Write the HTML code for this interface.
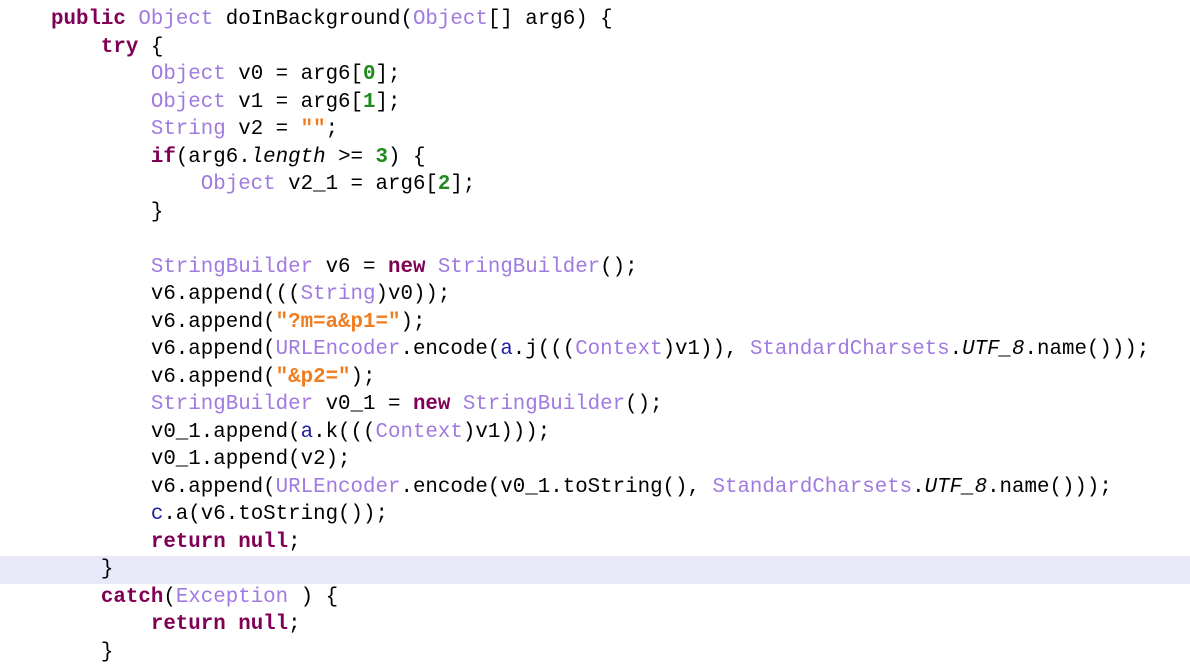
<!DOCTYPE html><html><head><style>
body{margin:0;background:#fff;width:1190px;height:666px;overflow:hidden}
pre{margin:0;padding-top:6px;font-family:"Liberation Mono",monospace;font-size:20.8px;line-height:27.5px;color:#000;position:relative}
.l{display:block;padding-left:51px;height:27.5px}
.hl{background:#e8e8f8}
.k{color:#7f0055;font-weight:bold}
.t{color:#a07ae0}
.s{color:#f07c1e;font-weight:bold}
.n{color:#1e8a1e;font-weight:bold}
.c{color:#1f1f9f}
i{font-style:italic}
</style></head><body><pre><span class="l"><span class="k">public</span> <span class="t">Object</span> doInBackground(<span class="t">Object</span>[] arg6) {</span><span class="l">    <span class="k">try</span> {</span><span class="l">        <span class="t">Object</span> v0 = arg6[<span class="n">0</span>];</span><span class="l">        <span class="t">Object</span> v1 = arg6[<span class="n">1</span>];</span><span class="l">        <span class="t">String</span> v2 = <span class="s">""</span>;</span><span class="l">        <span class="k">if</span>(arg6.<i>length</i> &gt;= <span class="n">3</span>) {</span><span class="l">            <span class="t">Object</span> v2_1 = arg6[<span class="n">2</span>];</span><span class="l">        }</span><span class="l"> </span><span class="l">        <span class="t">StringBuilder</span> v6 = <span class="k">new</span> <span class="t">StringBuilder</span>();</span><span class="l">        v6.append(((<span class="t">String</span>)v0));</span><span class="l">        v6.append(<span class="s">"?m=a&amp;p1="</span>);</span><span class="l">        v6.append(<span class="t">URLEncoder</span>.encode(<span class="c">a</span>.j(((<span class="t">Context</span>)v1)), <span class="t">StandardCharsets</span>.<i>UTF_8</i>.name()));</span><span class="l">        v6.append(<span class="s">"&amp;p2="</span>);</span><span class="l">        <span class="t">StringBuilder</span> v0_1 = <span class="k">new</span> <span class="t">StringBuilder</span>();</span><span class="l">        v0_1.append(<span class="c">a</span>.k(((<span class="t">Context</span>)v1)));</span><span class="l">        v0_1.append(v2);</span><span class="l">        v6.append(<span class="t">URLEncoder</span>.encode(v0_1.toString(), <span class="t">StandardCharsets</span>.<i>UTF_8</i>.name()));</span><span class="l">        <span class="c">c</span>.a(v6.toString());</span><span class="l">        <span class="k">return</span> <span class="k">null</span>;</span><span class="l hl">    }</span><span class="l">    <span class="k">catch</span>(<span class="t">Exception</span> ) {</span><span class="l">        <span class="k">return</span> <span class="k">null</span>;</span><span class="l">    }</span></pre></body></html>
